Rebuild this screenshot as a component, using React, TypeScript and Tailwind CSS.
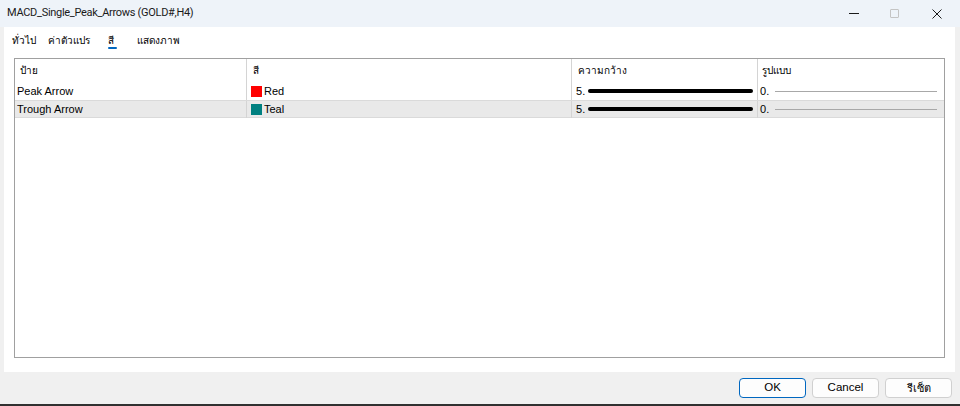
import React from 'react';

type Row = {
  label: string;
  colorName: string;
  swatch: string;
  width: number;
  style: number;
};

const rows: Row[] = [
  { label: 'Peak Arrow', colorName: 'Red', swatch: 'bg-[#ff0000]', width: 5, style: 0 },
  { label: 'Trough Arrow', colorName: 'Teal', swatch: 'bg-[#008080]', width: 5, style: 0 },
];

const tabs = [
  { label: 'ทั่วไป', w: 'w-[36px]' },
  { label: 'ค่าตัวแปร', w: 'w-[60px]' },
  { label: 'สี', w: 'w-[29px]' },
  { label: 'แสดงภาพ', w: 'w-[60px]' },
];

function TitleBar() {
  return (
    <div className="h-[27px] bg-[#eef3f9] flex items-center shrink-0">
      <span className="pl-[7px] text-[11px] tracking-[-0.3px] text-[#1a1a1a] flex-1 font-['Roboto',sans-serif]">
        MACD_Single_Peak_Arrows (GOLD#,H4)
      </span>
      <div className="flex items-center h-full">
        <div className="w-[40px] h-full flex items-center justify-center">
          <div className="w-[10px] h-px bg-[#1a1a1a]" />
        </div>
        <div className="w-[40px] h-full flex items-center justify-center">
          <div className="w-[9px] h-[9px] border border-[#c4c4c4] rounded-[1px]" />
        </div>
        <div className="w-[46px] h-full flex items-center justify-center">
          <svg width="10" height="10" viewBox="0 0 10 10">
            <path d="M0.5 0.5 L9.5 9.5 M9.5 0.5 L0.5 9.5" stroke="#1a1a1a" strokeWidth="1" />
          </svg>
        </div>
      </div>
    </div>
  );
}

function Tabs() {
  return (
    <div className="flex items-start h-[31px] pl-[8px] pt-[6px] text-[10px] text-black">
      {tabs.map((t, i) => (
        <div key={t.label} className={`relative shrink-0 ${t.w}`}>
          <span>{t.label}</span>
          {i === 2 && (
            <div className="absolute left-0 top-[14px] w-[9px] h-[2px] rounded-full bg-[#0067c0]" />
          )}
        </div>
      ))}
    </div>
  );
}

function Table() {
  const cols = 'grid grid-cols-[232px_325px_186px_1fr]';
  return (
    <div className="mx-[10px] h-[300px] border border-[#a0a0a0] bg-white text-[11px] text-black">
      <div className={`${cols} h-[23px] text-[10px]`}>
        <div className="pl-[5px] flex items-center border-r border-[#d4d4d4]">ป้าย</div>
        <div className="pl-[6px] flex items-center border-r border-[#d4d4d4]">สี</div>
        <div className="pl-[6px] flex items-center border-r border-[#d4d4d4]">ความกว้าง</div>
        <div className="pl-[4px] flex items-center">รูปแบบ</div>
      </div>
      {rows.map((r, i) => (
        <div
          key={r.label}
          className={`${cols} h-[18px] ${i % 2 === 1 ? 'bg-[#e9e9e9] border-y border-[#dadada]' : ''}`}
        >
          <div className="pl-[2px] flex items-center border-r border-[#d4d4d4]">{r.label}</div>
          <div className="pl-[4px] flex items-center gap-[2px] border-r border-[#d4d4d4]">
            <div className={`w-[11px] h-[11px] ${r.swatch}`} />
            <span>{r.colorName}</span>
          </div>
          <div className="pl-[4px] pr-[4px] flex items-center gap-[3px] border-r border-[#d4d4d4]">
            <span>{r.width}.</span>
            <div className="flex-1 h-[4px] rounded-full bg-black" />
          </div>
          <div className="pl-[2px] pr-[7px] flex items-center gap-[6px]">
            <span>{r.style}.</span>
            <div className="flex-1 h-px bg-[#a8a8a8]" />
          </div>
        </div>
      ))}
    </div>
  );
}

function Buttons() {
  return (
    <div className="h-[32px] flex items-start justify-end gap-[6px] pr-[8px] pt-[6px] shrink-0">
      <button className="w-[67px] h-[20px] rounded-[4px] border border-[#0067c0] bg-[#fdfdfd] text-[11.5px] text-black">
        OK
      </button>
      <button className="w-[67px] h-[20px] rounded-[4px] border border-[#d0d0d0] bg-[#fdfdfd] text-[11.5px] text-black">
        Cancel
      </button>
      <button className="w-[67px] h-[20px] rounded-[4px] border border-[#d0d0d0] bg-[#fdfdfd] text-[11px] text-black">
        รีเซ็ต
      </button>
    </div>
  );
}

export default function App() {
  return (
    <div className="w-[960px] h-[406px] bg-[#f0f0f0] flex flex-col font-['Liberation_Sans',sans-serif]">
      <TitleBar />
      <div className="flex-1 px-[4px] pr-[5px]">
        <div className="h-[345px] bg-white flex flex-col">
          <Tabs />
          <Table />
        </div>
      </div>
      <Buttons />
      <div className="h-[2px] bg-[#303030] shrink-0" />
    </div>
  );
}
